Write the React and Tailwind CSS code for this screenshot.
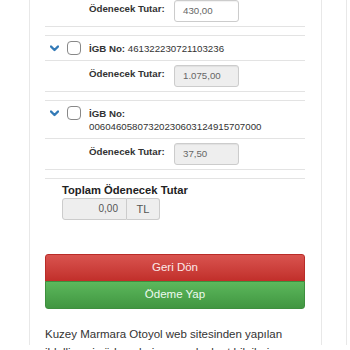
const items = [
  { id: 'a', no: null, amount: '430,00', editable: true },
  { id: 'b', no: '461322230721103236', amount: '1.075,00', editable: false },
  { id: 'c', no: '00604605807320230603124915707000', amount: '37,50', editable: false, wrap: true },
];

const Chevron = () => (
  <svg width="9" height="7" viewBox="0 0 9 7" className="shrink-0">
    <path d="M1 1.5 L4.5 5 L8 1.5" fill="none" stroke="#337ab7" strokeWidth="2.4" strokeLinecap="round" strokeLinejoin="round" />
  </svg>
);

const AmountRow = ({ amount, editable }) => (
  <div className="flex items-start pl-[44px] pt-[4px] pb-[4px]">
    <span className="w-[85px] pt-[2px] text-[9.7px] leading-[14px] font-bold text-[#333]">Ödenecek Tutar:</span>
    <div
      className={`h-[22px] w-[65px] rounded-[3px] border border-[#ccc] px-[8px] text-[9.7px] leading-[20px] text-[#666] ${
        editable ? 'bg-white' : 'bg-[#eee]'
      } shadow-[inset_0_1px_1px_rgba(0,0,0,0.06)]`}
    >
      {amount}
    </div>
  </div>
);

const Item = ({ item }) => (
  <div className="border-y border-[#e3e3e3]">
    {item.no && (
      <div className="flex items-start border-b border-[#e3e3e3] pt-[6px] pb-[5px]">
        <div className="flex w-[44px] items-start pl-[5px] pt-[2px]">
          <div className="pt-[1px]"><Chevron /></div>
          <div className="ml-[8px] -mt-[3px] h-[14px] w-[14px] rounded-[4px] border border-[#888] bg-white" />
        </div>
        <div className="text-[9.7px] leading-[13px] text-[#333]">
          <span className="font-bold">İGB No:</span>
          {item.wrap ? <br /> : ' '}
          {item.no}
        </div>
      </div>
    )}
    <AmountRow amount={item.amount} editable={item.editable} />
  </div>
);

export default function App() {
  return (
    <div className="h-[350px] w-[350px] overflow-hidden bg-white font-['Liberation_Sans',Arial,sans-serif]">
      <div className="h-full w-[347px] border-r border-[#e8e8e8] pl-[29px]">
        <div className="h-full w-[293px] border-x border-[#e8e8e8] pl-[15px] pr-[16px]">
          <div className="-mt-[5px] flex flex-col gap-[8px]">
            {items.map((item) => (
              <Item key={item.id} item={item} />
            ))}
            <div className="border-t border-[#e3e3e3] pl-[17px] pt-[4px]">
              <div className="text-[11.2px] leading-[14px] font-bold text-[#222]">Toplam Ödenecek Tutar</div>
              <div className="mt-[1px] flex h-[22px] w-[98px] text-[10px] text-[#555]">
                <div className="w-[65px] rounded-l-[3px] border border-[#ccc] bg-[#eee] pr-[8px] text-right leading-[20px]">0,00</div>
                <div className="w-[33px] rounded-r-[3px] border border-l-0 border-[#ccc] bg-[#eee] text-center text-[11px] leading-[20px]">TL</div>
              </div>
            </div>
          </div>
          <div className="mt-[34px] flex flex-col">
            <button className="h-[28px] rounded-t-[3px] border border-[#b92c28] bg-gradient-to-b from-[#d9534f] to-[#c12e2a] text-[11.5px] text-[#fbe9e9]">
              Geri Dön
            </button>
            <button className="h-[28px] -mt-[1px] rounded-b-[3px] border border-[#3e8f3e] bg-gradient-to-b from-[#5cb85c] to-[#419641] text-[11.5px] text-[#eefaee]">
              Ödeme Yap
            </button>
          </div>
          <p className="mt-[16px] text-[11.5px] leading-[18px] text-[#333]">
            Kuzey Marmara Otoyol web sitesinden yapılan ihlalli geçiş ödemeleri sırasında, kart bilgileri
          </p>
        </div>
      </div>
    </div>
  );
}
